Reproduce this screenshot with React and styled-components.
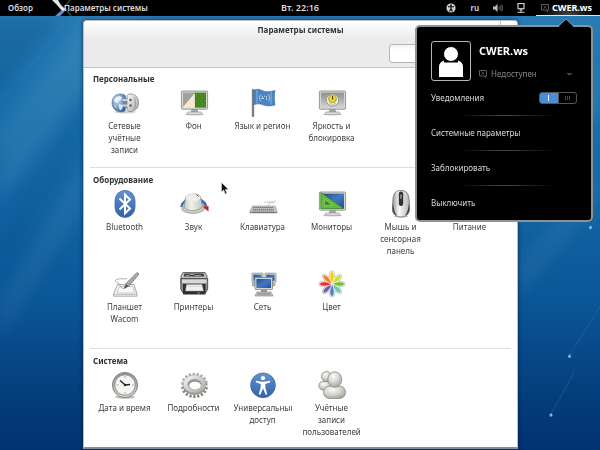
import React, { useState } from "react";
import styled, { createGlobalStyle } from "styled-components";

const GlobalStyle = createGlobalStyle`
  *, *::before, *::after { box-sizing: border-box; }
  body { margin: 0; background: #04356f; }
  body, button, input, select { font-family: "Noto Sans", "Open Sans", sans-serif; font-size: 8px; line-height: 12px; }
  button { border: 0; padding: 0; margin: 0; background: none; color: inherit; cursor: default; }
  h1, h2, p { margin: 0; font-size: inherit; }
  svg { display: block; }
`;

const Desktop = styled.div`
  position: relative;
  min-height: 100vh;
  overflow: hidden;
  background: linear-gradient(180deg, #2a7eb6 0%, #1b72ad 22%, #1265a3 45%, #0a5595 68%, #043b7a 90%, #023270 100%);
`;

const Wallpaper = styled.svg`
  position: absolute;
  inset: 0;
  width: 100%;
  height: 100%;
`;

const TopBar = styled.header`
  position: relative;
  z-index: 2;
  display: grid;
  grid-template-columns: 1fr auto 1fr;
  align-items: center;
  height: 16px;
  background: #000;
  color: #dcdcdc;
`;

const BarLeft = styled.div`
  display: flex;
  align-items: center;
  gap: 19px;
  padding-left: 8px;
`;

const AppButton = styled.button`
  display: flex;
  align-items: center;
  height: 16px;
  font-weight: 600;
`;

const AppName = styled.span`
  margin-left: -9px;
`;

const BarButton = styled.button`
  display: flex;
  align-items: center;
  justify-content: center;
  height: 16px;
  font-weight: 600;
`;

const Clock = styled(BarButton)`
  font-size: 9px;
`;

const BarRight = styled.div`
  display: flex;
  align-items: center;
  justify-content: flex-end;
  gap: 14px;
`;

const UserMenu = styled.div`
  position: relative;
  margin-left: -3px;
`;

const UserButton = styled.button`
  display: flex;
  align-items: center;
  justify-content: center;
  gap: 3px;
  width: 64px;
  height: 16px;
  padding-right: 3px;
  border-bottom: 1px solid #e6e6e6;
  background: radial-gradient(ellipse at 50% 100%, #454545 0, #000 60%);
  color: #fff;
  font-size: 9px;
  font-weight: 700;
`;

const Popup = styled.div`
  position: absolute;
  top: 25px;
  right: 7px;
  width: 178px;
  padding: 14px 14px 11px;
  border: 2px solid #8d9296;
  border-radius: 5px;
  background: #000;
  color: #dcdcdc;
`;

const PopupArrow = styled.svg`
  position: absolute;
  top: -9px;
  right: 17px;
`;

const Profile = styled.div`
  display: flex;
  gap: 8px;
  margin-bottom: 11px;
`;

const Avatar = styled.div`
  width: 40px;
  height: 40px;
  border: 1px solid #b5b5b5;
  border-radius: 3px;
`;

const ProfileText = styled.div`
  display: flex;
  flex: 1;
  flex-direction: column;
  justify-content: space-between;
  padding: 2px 0 1px;
`;

const UserName = styled.p`
  color: #fff;
  && { font-size: 11px; }
  line-height: 16px;
  font-weight: 700;
`;

const StatusRow = styled.label`
  display: flex;
  align-items: center;
  gap: 4px;
  padding-right: 5px;
`;

const StatusSelect = styled.select`
  flex: 1;
  min-width: 0;
  height: 12px;
  padding: 0;
  border: 0;
  appearance: none;
  background: transparent;
  color: #858585;
`;

const SwitchRow = styled.label`
  display: flex;
  align-items: center;
  justify-content: space-between;
  height: 12px;
`;

const Switch = styled.input`
  width: 38px;
  height: 12px;
  margin: 0;
  border: 1px solid #555;
  border-radius: 3px;
  appearance: none;
  background:
    linear-gradient(#fff, #fff) 8px 2px / 1px 6px no-repeat,
    linear-gradient(#444, #444) 25px 3px / 1px 4px no-repeat,
    linear-gradient(#444, #444) 27px 3px / 1px 4px no-repeat,
    linear-gradient(#444, #444) 29px 3px / 1px 4px no-repeat,
    linear-gradient(90deg, #4a8edb 18px, #555 18px, #555 19px, #000 19px);
`;

const Rule = styled.hr`
  height: 1px;
  margin: 11px 0;
  border: 0;
  background: linear-gradient(90deg, transparent 20%, #4a4a4a 50%, transparent 85%);
`;

const MenuItem = styled.button`
  display: block;
  width: 100%;
  text-align: left;
`;

const Window = styled.main`
  position: relative;
  margin: 4px 82px 2px 83px;
  border: 1px solid #b9bec2;
  border-bottom: 2px solid #8b8e90;
  border-radius: 4px 4px 0 0;
  background: #fff;
  box-shadow: 0 0 4px rgba(0, 20, 50, 0.7);
`;

const WindowHeader = styled.div`
  padding-bottom: 4px;
  border-bottom: 1px solid #c4c4c4;
  border-radius: 3px 3px 0 0;
  background: linear-gradient(#fff, #ebebeb 18px, #ebebeb);
`;

const TitleRow = styled.div`
  display: grid;
  grid-template-columns: 17px 1fr 17px;
  align-items: center;
  height: 18px;
`;

const Title = styled.h1`
  grid-column: 2;
  text-align: center;
  color: #303436;
`;

const CloseButton = styled.button`
  display: grid;
  place-items: center;
  height: 18px;
  border-left: 1px solid #c4c4c4;
  color: #777;
`;

const Toolbar = styled.div`
  display: flex;
  justify-content: flex-end;
  padding: 5px 7px 0;
`;

const Search = styled.input`
  width: 121px;
  height: 19px;
  padding: 0 6px;
  border: 1px solid #b4b4b4;
  border-radius: 3px;
  background: linear-gradient(#f4f4f4, #fff 5px);
`;

const Section = styled.section`
  margin: 0 6px;
  padding: 6px 0 11px;
  & + & { border-top: 1px solid #dedede; }
  &:first-of-type { padding-top: 5px; }
  &:last-child { padding-bottom: 9px; }
`;

const SectionTitle = styled.h2`
  padding-left: 3px;
  color: #2e3436;
`;

const IconGrid = styled.div`
  display: grid;
  grid-template-columns: repeat(auto-fill, 69px);
  grid-auto-rows: minmax(67px, auto);
  row-gap: 13px;
  padding-top: 4px;
`;

const Launcher = styled.button`
  display: flex;
  flex-direction: column;
  align-items: center;
  gap: 3px;
  color: #3a3f41;
`;

const LauncherLabel = styled.span`
  max-width: 58px;
  overflow: hidden;
  white-space: pre-line;
  text-align: center;
`;

const Pointer = styled.svg`
  position: absolute;
  z-index: 3;
  left: 221px;
  top: 182px;
`;

const Icon = ({ children }) => (
  <svg width="28" height="28" viewBox="0 0 28 28" overflow="visible" aria-hidden="true">
    {children}
  </svg>
);

const Gradients = () => (
  <svg width="0" height="0" aria-hidden="true">
    <defs>
      <linearGradient id="silver" x1="0" y1="0" x2="1" y2="1">
        <stop offset="0" stopColor="#fbfbf9" />
        <stop offset="1" stopColor="#a4a6a1" />
      </linearGradient>
      <linearGradient id="steel" x1="0" y1="0" x2="0" y2="1">
        <stop offset="0" stopColor="#8e908c" />
        <stop offset="1" stopColor="#d3d4cf" />
      </linearGradient>
      <linearGradient id="blue" x1="0" y1="0" x2="0" y2="1">
        <stop offset="0" stopColor="#6593d0" />
        <stop offset="1" stopColor="#2f62ac" />
      </linearGradient>
      <linearGradient id="screen" x1="0" y1="0" x2="1" y2="1">
        <stop offset="0" stopColor="#1c4a8c" />
        <stop offset="0.5" stopColor="#4379c2" />
        <stop offset="1" stopColor="#1f5096" />
      </linearGradient>
      <linearGradient id="rubber" x1="0" y1="0" x2="1" y2="0">
        <stop offset="0" stopColor="#9a9c98" />
        <stop offset="0.4" stopColor="#fafafa" />
        <stop offset="1" stopColor="#b3b5b1" />
      </linearGradient>
      <linearGradient id="knob" x1="0" y1="0" x2="1" y2="0">
        <stop offset="0" stopColor="#c9cac3" />
        <stop offset="0.4" stopColor="#f2f2ed" />
        <stop offset="1" stopColor="#c3c4bc" />
      </linearGradient>
      <radialGradient id="pearl" cx="0.4" cy="0.3" r="0.75">
        <stop offset="0" stopColor="#fbfbf8" />
        <stop offset="0.5" stopColor="#d6d7d0" />
        <stop offset="1" stopColor="#9fa19a" />
      </radialGradient>
      <radialGradient id="globe" cx="0.4" cy="0.35" r="0.7">
        <stop offset="0" stopColor="#d7e4f3" />
        <stop offset="0.6" stopColor="#7799c8" />
        <stop offset="1" stopColor="#395d93" />
      </radialGradient>
      <filter id="soft" x="-20%" y="-20%" width="140%" height="140%">
        <feGaussianBlur stdDeviation="7" />
      </filter>
    </defs>
  </svg>
);

const MonitorFrame = ({ children }) => (
  <Icon>
    <ellipse cx="14.500" cy="25.500" rx="10" ry="1.200" fill="#000" opacity="0.15" />
    <path d="M11.500 20h6l.8 3.500h-7.600z" fill="#a8aaa5" />
    <path d="M8 23h13l1.500 2.300h-16z" fill="#e4e5e1" stroke="#85878a" strokeWidth=".6" />
    <rect x="1.400" y="2" width="26.200" height="18.200" rx="1" fill="#d6d7d3" stroke="#85877f" strokeWidth=".8" />
    {children}
  </Icon>
);

const AccountsIcon = () => (
  <Icon>
    <ellipse cx="14" cy="23" rx="11" ry="1.500" opacity=".18" />
    <path d="M10 5C4 4.500 1 9 1 14s4 9 9 9c3 0 4.500-1 4.500-2.500V8c0-2-1.500-3-4.500-3z" fill="url(#globe)" stroke="#56759f" strokeWidth=".6" />
    <path d="M4 9l4-2 3 1-1 3-3 1-1 2-3-2zM8 15l4 1-1 4-2 1.500-1-3zM3 16l2 1v2z" fill="#f3f6fa" opacity=".85" />
    <path d="M15 9h3v10h-3" fill="#74777a" />
    <path d="M19 5c5-.5 8.500 3.500 8.500 9s-3.500 8-8 8.500c-2.500 0-3.500-1-3.500-3V8c0-2 1-3 3-3z" fill="url(#silver)" stroke="#84888c" strokeWidth=".8" />
    <path d="M11.500 11h5.500M11.500 16.500h5.500" stroke="#cfd2d4" strokeWidth="1.800" />
    <circle cx="19.500" cy="11" r="1.200" fill="#565a5e" />
    <circle cx="19.500" cy="16.500" r="1.200" fill="#565a5e" />
    <path d="M23 8c2 3 2 9 0 12" fill="none" stroke="#8d9195" strokeWidth=".8" />
  </Icon>
);

const BackgroundIcon = () => (
  <MonitorFrame>
    <rect x="3" y="3.600" width="11.500" height="15" fill="#a0a29e" />
    <rect x="14.500" y="3.600" width="11.500" height="15" fill="#43861f" />
    <path d="M16 6h1M20 6h1M24 6h1M18 9h1M22 9h1M16 12h1M20 12h1M24 12h1M18 15h1M22 15h1" stroke="#69aa3d" strokeWidth="1" />
    <path d="M3 18.600L14.500 5v13.600z" fill="#fae7cf" stroke="#fff" strokeWidth=".5" />
  </MonitorFrame>
);

const FlagIcon = () => (
  <Icon>
    <rect x="3" y="0" width="2" height="28" rx="1" fill="#828480" stroke="#5f625f" strokeWidth=".3" />
    <path d="M5 1c3-1 5-1 8 .6s8 1.400 13 0c-.8 4-.8 9 0 14.400-5 1.400-9 1-12-.2S8 14.600 5 15.600z" fill="#4a84c4" stroke="#386ba8" strokeWidth=".6" />
    <path d="M8 1v13.500M22 2.500v13" stroke="#8db7e1" strokeWidth="1.600" opacity=".6" />
    <path d="M12 5.500c-2 2-2 5 0 7M19 5.500c2 2 2 5 0 7M13.500 7v3M15.500 6.500v1.500M17.500 7v4M12 9.500h3" fill="none" stroke="#c5daef" strokeWidth=".8" />
  </Icon>
);

const BrightnessIcon = () => (
  <MonitorFrame>
    <rect x="3" y="3.600" width="23" height="15" fill="url(#steel)" />
    <circle cx="14.500" cy="11" r="6.200" fill="#efefeb" stroke="#7b7d78" strokeWidth=".7" />
    <circle cx="14.500" cy="9.700" r="4" fill="#edd42d" stroke="#8d7b18" strokeWidth=".6" />
    <path d="M14.500 7v3h1" fill="none" stroke="#333" strokeWidth=".9" />
    <path d="M11 14.500q3.500 2 7 0" fill="none" stroke="#aaa" strokeWidth=".8" />
  </MonitorFrame>
);

const BluetoothIcon = () => (
  <Icon>
    <rect x="4" y=".4" width="20" height="27" rx="10" fill="url(#blue)" stroke="#3c69a8" strokeWidth=".8" />
    <path d="M8.500 8.500l10.500 10-5 4.800V4.700l5 4.800-10.500 10" fill="none" stroke="#fff" strokeWidth="2" />
  </Icon>
);

const SoundIcon = () => (
  <Icon>
    <ellipse cx="13" cy="19" rx="12" ry="5" opacity=".2" />
    <path d="M1.500 17A12.500 9.500 0 0 1 26 16" fill="none" stroke="#3a6fb7" strokeWidth="3" />
    <path d="M22 16.500l6.500-.5v5.500z" fill="#cc1f1f" />
    <ellipse cx="13" cy="17" rx="10.500" ry="6.200" fill="#d3d4ce" stroke="#898b86" strokeWidth=".6" />
    <path d="M5.500 7.500C7 3.500 19 2.500 20.500 7l2 9c-2 6-16.500 6-18.500 1z" fill="url(#knob)" stroke="#85877f" strokeWidth=".7" />
    <ellipse cx="13" cy="7.600" rx="7.300" ry="3.600" fill="#eeeeea" />
    <path d="M16.500 4.500l2 2" stroke="#444" strokeWidth="1" />
  </Icon>
);

const KeyboardIcon = () => (
  <Icon>
    <path d="M15 13c2-2 7 0 12-2M19 16c-1-3 4-4 6-3" fill="none" stroke="#b4b6b4" strokeWidth=".8" />
    <path d="M3.500 16h22.500l2 5v2H1v-2z" fill="#c7c8c5" stroke="#8e908d" strokeWidth=".6" />
    <path d="M4.500 17.500h20M4 19.300h21M3.500 21h22" stroke="#70736f" strokeWidth="1" strokeDasharray="1.500 .5" />
    <path d="M1 22.500h27" stroke="#787a77" strokeWidth="1" />
  </Icon>
);

const DisplaysIcon = () => (
  <MonitorFrame>
    <rect x="3" y="3.600" width="23" height="15" fill="url(#screen)" />
    <path d="M2.800 2.500L25.500 18.600H2.800z" fill="#62bb3c" stroke="#3a8720" strokeWidth=".7" />
    <path d="M6.700 9.500l7.600 5.700H6.700z" fill="#39792d" stroke="#a4dd7f" strokeWidth=".7" />
  </MonitorFrame>
);

const MouseIcon = () => (
  <Icon>
    <ellipse cx="14" cy="26.400" rx="7" ry="1.200" opacity=".25" />
    <path d="M14 .5c5 0 7.600 2.500 8 8.500l.6 10c0 5-3.500 8-8.600 8s-8.600-3-8.600-8L6 9c.4-6 3-8.500 8-8.500z" fill="url(#rubber)" stroke="#6d6f6d" strokeWidth=".8" />
    <path d="M6 13c.5 4 1 9 4 12.500-4-1.500-5-5-4-12.500zM22 13c-.5 4-1 9-4 12.500 4-1.500 5-5 4-12.500z" fill="#383a3a" />
    <rect x="11.800" y="1.500" width="4.400" height="14.500" rx="2.200" fill="#303233" />
    <rect x="13.300" y="4.500" width="1.400" height="4.500" rx=".7" fill="#9c9e9e" />
  </Icon>
);

const PowerIcon = () => (
  <Icon>
    <rect x="8" y="4" width="13" height="21" rx="2" fill="url(#silver)" stroke="#777" />
    <rect x="12" y="1" width="5" height="3" fill="#999" />
  </Icon>
);

const TabletIcon = () => (
  <Icon>
    <path d="M6.500 14.500h16.500l3 9.500v2.200H2.500V24z" fill="#f1f1ef" stroke="#989a97" strokeWidth=".8" />
    <path d="M8.500 16.500h13l2.200 6.500H6z" fill="#fbfbfb" stroke="#b5b7b5" strokeWidth=".7" />
    <path d="M2.500 24.500h23.500" stroke="#aaa" strokeWidth=".6" />
    <path d="M12.500 18.500c-5-1-2-4-5.500-5.500s-4-3 0-4 8 1 9-1" fill="none" stroke="#8b8e8c" strokeWidth=".7" />
    <path d="M13 18.500l2-5L26 2.500l2 1.500L18 16z" fill="#a7aaa9" stroke="#646866" strokeWidth=".7" />
    <path d="M13 18.500l2.500-4 1.700 1.500z" fill="#444" />
  </Icon>
);

const PrinterIcon = () => (
  <Icon>
    <path d="M3 2.500h22l2 3.500v7H1V6z" fill="#bfc1be" stroke="#4a4d4b" strokeWidth=".8" />
    <path d="M4.500 3.500h19l.8 3H3.800z" fill="#3e4140" />
    <path d="M6 5.500h3l1-1h4l1 1h6" stroke="#d4d5d4" strokeWidth=".6" fill="none" />
    <path d="M.8 8.500h26.900v10.500l-1.800 3.500H2.600L.8 19z" fill="#8d8f8c" stroke="#3f4241" strokeWidth=".8" />
    <path d="M2 9.500h24.500v3.500H2z" fill="#d7d8d4" />
    <path d="M3 14h22.500v10.500H3z" fill="#2c2f30" />
    <path d="M6.500 14.500h15.500l1.500 6.500h-18z" fill="#f0f0ee" stroke="#999" strokeWidth=".5" />
    <path d="M7.500 16.500h14" stroke="#c6c7c5" strokeWidth=".6" />
    <path d="M17 23h3" stroke="#5c86ba" strokeWidth="1" />
  </Icon>
);

const MiniMonitor = ({ x, y, w, h }) => (
  <g>
    <rect x={x} y={y} width={w} height={h} rx=".6" fill="#dfe0dc" stroke="#73766f" strokeWidth=".7" />
    <rect x={x + 1.4} y={y + 1.4} width={w - 2.8} height={h - 2.8} fill="url(#screen)" />
  </g>
);

const NetworkIcon = () => (
  <Icon>
    <path d="M3.500 13l3-1.500v4.500H3.500zM22 12l4.500 2-1 2H21z" fill="#b8bab7" stroke="#7e807d" strokeWidth=".5" />
    <MiniMonitor x={3} y={3.2} w={11} h={9} />
    <MiniMonitor x={16} y={3.2} w={11} h={9} />
    <MiniMonitor x={6} y={7.500} w={17.500} h={12} />
    <path d="M12 20h6v2h-6z" fill="#999b98" />
    <path d="M8 22h14l2 4H6z" fill="#c9cac7" stroke="#7e807d" strokeWidth=".6" />
    <path d="M8.500 23.300h13M8 24.700h14" stroke="#777a76" strokeWidth=".6" />
  </Icon>
);

const PETALS = ["#f9c91b", "#cddf25", "#68c52b", "#75c5a8", "#4485cb", "#735bad", "#ed3030", "#f68324"];
const PETAL = "M14 14C11.300 9.500 11.500 5 12.600 2.500Q14 .5 15.400 2.500C16.500 5 16.700 9.500 14 14z";

const ColorIcon = () => (
  <Icon>
    {PETALS.map((c, i) => (
      <path key={c} d={PETAL} fill="#fff" stroke="#c4c4c4" strokeWidth="2" transform={`rotate(${i * 45} 14 14)`} />
    ))}
    {PETALS.map((c, i) => (
      <path key={c} d={PETAL} fill={c} stroke="#fff" strokeWidth=".7" transform={`rotate(${i * 45} 14 14)`} />
    ))}
  </Icon>
);

const ClockIcon = () => (
  <Icon>
    <ellipse cx="14" cy="26" rx="10" ry="1.800" opacity=".25" />
    <circle cx="14" cy="14" r="12.600" fill="url(#steel)" stroke="#777975" strokeWidth=".8" />
    <circle cx="14" cy="14" r="10.200" fill="#f4f4f2" stroke="#8b8d89" strokeWidth=".8" />
    <path d="M14 5v2M14 21v2M5.500 14h2M21 14h2" stroke="#999" strokeWidth=".8" />
    <path d="M9 9.500l5 4.300" stroke="#222" strokeWidth="1.300" />
    <path d="M14 14l5-.5" stroke="#222" strokeWidth="1.400" />
    <circle cx="14" cy="14" r="1.200" fill="#222" />
  </Icon>
);

const GearIcon = () => (
  <Icon>
    <ellipse cx="14.500" cy="16" rx="11.700" ry="9.500" fill="none" stroke="#858783" strokeWidth="3" strokeDasharray="2.300 1.600" />
    <ellipse cx="14.500" cy="12.300" rx="11.700" ry="9" fill="none" stroke="#a7a9a5" strokeWidth="2.800" strokeDasharray="2.300 1.600" />
    <ellipse cx="14.500" cy="15" rx="11.300" ry="9" fill="#969894" />
    <ellipse cx="14.500" cy="13" rx="11.300" ry="9" fill="url(#silver)" stroke="#a5a7a3" strokeWidth=".5" />
    <ellipse cx="14.500" cy="13.300" rx="7" ry="5.300" fill="#969894" />
    <ellipse cx="15" cy="14.600" rx="5.800" ry="3.900" fill="#fff" />
  </Icon>
);

const AccessIcon = () => (
  <Icon>
    <circle cx="14" cy="14.300" r="12.400" fill="url(#blue)" stroke="#3462a5" strokeWidth=".7" />
    <circle cx="14" cy="7.200" r="2.100" fill="#fff" />
    <path d="M7 9.800l5.500 1h3l5.500-1 .2 1.500-5 1.600.2 3.800 1.900 6.500-1.700.6-2.600-6.500-2.600 6.500-1.700-.6 1.900-6.500.2-3.800-5-1.600z" fill="#fff" />
  </Icon>
);

const UsersIcon = () => (
  <Icon>
    <g fill="url(#pearl)" stroke="#8a8c85" strokeWidth=".8">
      <rect x=".8" y="10.500" width="13" height="8.500" rx="4.200" />
      <circle cx="8.500" cy="5.500" r="5" />
      <rect x="5.500" y="15" width="22" height="12.500" rx="6" />
      <ellipse cx="16.800" cy="8.500" rx="7" ry="7.700" />
    </g>
  </Icon>
);

const SECTIONS = [
  {
    title: "Персональные",
    items: [
      ["Сетевые\nучётные\nзаписи", AccountsIcon],
      ["Фон", BackgroundIcon],
      ["Язык и регион", FlagIcon],
      ["Яркость и\nблокировка", BrightnessIcon],
    ],
  },
  {
    title: "Оборудование",
    items: [
      ["Bluetooth", BluetoothIcon],
      ["Звук", SoundIcon],
      ["Клавиатура", KeyboardIcon],
      ["Мониторы", DisplaysIcon],
      ["Мышь и\nсенсорная\nпанель", MouseIcon],
      ["Питание", PowerIcon],
      ["Планшет\nWacom", TabletIcon],
      ["Принтеры", PrinterIcon],
      ["Сеть", NetworkIcon],
      ["Цвет", ColorIcon],
    ],
  },
  {
    title: "Система",
    items: [
      ["Дата и время", ClockIcon],
      ["Подробности", GearIcon],
      ["Универсальный\nдоступ", AccessIcon],
      ["Учётные\nзаписи\nпользователей", UsersIcon],
    ],
  },
];

const ChatIcon = () => (
  <svg width="8" height="8" viewBox="0 0 8 8" fill="none" stroke="#5c5c5c" aria-hidden="true">
    <path d="M.5 .5h7v5.500h-1v1.500L5 6H.5z" />
    <path d="M2.500 2l3 2.500M5.500 2l-3 2.500" strokeWidth=".8" />
  </svg>
);

export default function App() {
  const [notify, setNotify] = useState(true);
  return (
    <Desktop>
      <GlobalStyle />
      <Gradients />
      <Wallpaper viewBox="0 0 600 450" preserveAspectRatio="none" aria-hidden="true">
        <g fill="#fff" filter="url(#soft)">
          <path d="M0 130L90 16h60L0 200z" opacity=".06" />
          <path d="M0 300L83 160v50L0 340z" opacity=".05" />
          <path d="M518 160L600 60v50l-82 90z" opacity=".06" />
          <path d="M518 260l82-90v30l-82 100z" opacity=".05" />
        </g>
        <g fill="#003a78" filter="url(#soft)">
          <path d="M-20 16h85L-20 120z" opacity=".25" />
          <path d="M0 230l83-130v40L0 270z" opacity=".16" />
        </g>
        <g stroke="#7db4df" strokeWidth=".5">
          <path d="M20 80L70 16M32 80L84 20M45 90L83 42M0 180L83 70" opacity=".15" />
          <path d="M551 413L574 372M569 355L600 306M590 227L600 214" opacity=".4" />
        </g>
        <g fill="#8cc4ee">
          <circle cx="551" cy="414" r="1.500" />
          <circle cx="569.500" cy="355.500" r="1.500" />
          <circle cx="590.500" cy="227" r="1.500" />
        </g>
      </Wallpaper>
      <TopBar>
        <BarLeft>
          <BarButton>Обзор</BarButton>
          <AppButton>
            <svg width="21" height="16" viewBox="0 0 21 16" aria-hidden="true">
              <path d="M18 0L12 7l7 9" fill="none" stroke="#444" strokeWidth="1.300" />
              <path d="M0 0h6l3 5 4 4-3 2-5-6-2-2z" fill="#e2e4e4" />
              <path d="M3 16l7-6 3 1-5 5z" fill="#5d93d2" />
              <path d="M9 9l3-1 2 2-3 1z" fill="#eee" />
            </svg>
            <AppName>Параметры системы</AppName>
          </AppButton>
        </BarLeft>
        <Clock>Вт. 22:16</Clock>
        <BarRight>
          <BarButton aria-label="Универсальный доступ">
            <svg width="10" height="10" viewBox="0 0 10 10">
              <circle cx="5" cy="5" r="4.600" fill="#cfcfcf" />
              <circle cx="5" cy="2.300" r=".9" />
              <path d="M2 3.800h6M5 3.800v2.400M5 5.800L3.500 8.600M5 5.800l1.500 2.800" stroke="#000" strokeWidth="1.100" />
            </svg>
          </BarButton>
          <BarButton>ru</BarButton>
          <BarButton aria-label="Громкость">
            <svg width="10" height="8" viewBox="0 0 10 8" fill="none" stroke="#7c7c7c">
              <path d="M0 2.500h2L4.500 0v8L2 5.500H0z" fill="#bdbdbd" stroke="none" />
              <path d="M5.800 2.500q1 1.500 0 3M7.300 1.500q1.700 2.500 0 5M8.700 .5q2 3.500 0 7" strokeWidth=".8" />
            </svg>
          </BarButton>
          <BarButton aria-label="Сеть">
            <svg width="8" height="10" viewBox="0 0 8 10" fill="none" stroke="#cfcfcf">
              <rect x="1" y=".5" width="6" height="5.200" strokeWidth="1.200" />
              <path d="M4 6v3M.5 9.300h7M2.500 7h3" />
            </svg>
          </BarButton>
          <UserMenu>
            <UserButton aria-expanded="true"><ChatIcon />CWER.ws</UserButton>
            <Popup>
              <PopupArrow width="16" height="9" viewBox="0 0 16 9" aria-hidden="true">
                <path d="M1 8l7-7 7 7v1H1z" />
                <path d="M1 7.500l7-6.500 7 6.500" fill="none" stroke="#8d9296" />
              </PopupArrow>
              <Profile>
                <Avatar>
                  <svg width="38" height="38" viewBox="0 0 38 38" fill="#fff" aria-hidden="true">
                    <path d="M7 35V25q0-5 5-6.500h14q5 1.500 5 6.500v10z" />
                    <path d="M12 17.500h14v3H12z" fill="#000" />
                    <circle cx="19" cy="12" r="7.500" stroke="#000" strokeWidth="1" />
                  </svg>
                </Avatar>
                <ProfileText>
                  <UserName>CWER.ws</UserName>
                  <StatusRow>
                    <ChatIcon />
                    <StatusSelect aria-label="Статус"><option>Недоступен</option></StatusSelect>
                    <svg width="5" height="4" viewBox="0 0 5 4" fill="none" stroke="#999" aria-hidden="true"><path d="M.5 1l2 2 2-2" /></svg>
                  </StatusRow>
                </ProfileText>
              </Profile>
              <SwitchRow>
                Уведомления
                <Switch type="checkbox" role="switch" checked={notify} onChange={(e) => setNotify(e.target.checked)} />
              </SwitchRow>
              <Rule />
              <MenuItem>Системные параметры</MenuItem>
              <Rule />
              <MenuItem>Заблокировать</MenuItem>
              <Rule />
              <MenuItem>Выключить</MenuItem>
            </Popup>
          </UserMenu>
        </BarRight>
      </TopBar>
      <Window>
        <WindowHeader>
          <TitleRow>
            <Title>Параметры системы</Title>
            <CloseButton aria-label="Закрыть">
              <svg width="6" height="6" viewBox="0 0 6 6" stroke="currentColor"><path d="M1 1l4 4M5 1L1 5" /></svg>
            </CloseButton>
          </TitleRow>
          <Toolbar><Search type="search" aria-label="Поиск" /></Toolbar>
        </WindowHeader>
        {SECTIONS.map((section) => (
          <Section key={section.title}>
            <SectionTitle>{section.title}</SectionTitle>
            <IconGrid>
              {section.items.map(([label, Glyph]) => (
                <Launcher key={label}>
                  <Glyph />
                  <LauncherLabel>{label}</LauncherLabel>
                </Launcher>
              ))}
            </IconGrid>
          </Section>
        ))}
      </Window>
      <Pointer width="9" height="13" viewBox="0 0 9 13" aria-hidden="true">
        <path d="M.5 .5v9.500l2.200-2 1.600 4 1.600-.7L4.300 7.500h3.200z" fill="#111" stroke="#ddd" strokeWidth=".6" />
      </Pointer>
    </Desktop>
  );
}
